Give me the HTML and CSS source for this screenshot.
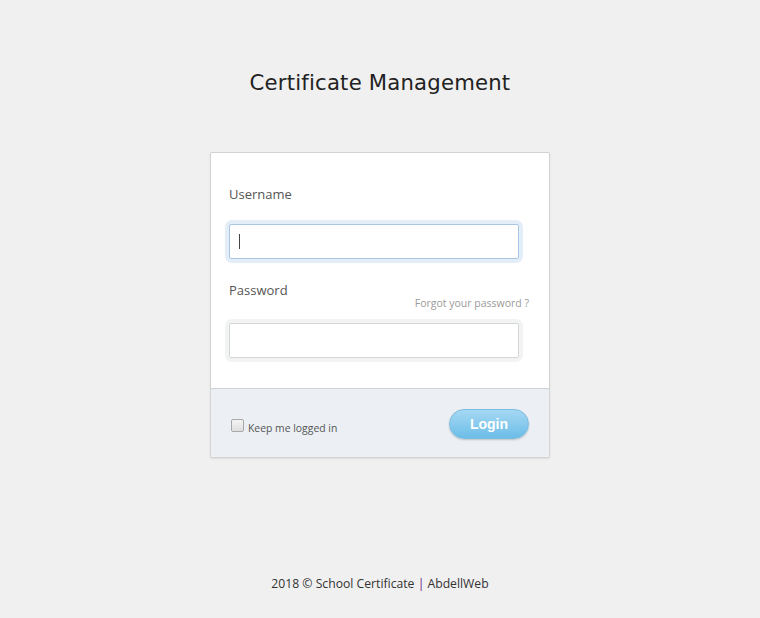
FILE: index.html
```html
<!DOCTYPE html>
<html>
<head>
<meta charset="utf-8">
<link rel="stylesheet" href="styles.css">
</head>
<body>
<div class="page">
  <h1 class="title">Certificate Management</h1>
  <form class="card">
    <div class="card-body">
      <label class="label" for="user">Username</label>
      <div class="field field-focus"><input class="input" id="user" type="text"><span class="caret"></span></div>
      <div class="pw-head">
        <label class="label" for="pw">Password</label>
        <a class="forgot" href="#">Forgot your password ?</a>
      </div>
      <div class="field"><input class="input" id="pw" type="password"></div>
    </div>
    <div class="card-foot">
      <label class="keep"><span class="check"></span>Keep me logged in</label>
      <button class="login" type="button">Login</button>
    </div>
  </form>
  <footer class="footer">2018 © School Certificate <span class="pipe">|</span> AbdellWeb</footer>
</div>
</body>
</html>
```
FILE: styles.css
```css
html, body {
  margin: 0;
  padding: 0;
  background: #f0f0f0;
}
.page {
  width: 760px;
  height: 618px;
  display: flex;
  flex-direction: column;
  align-items: center;
}
.title {
  margin: 69px 0 0;
  font-family: "DejaVu Sans", Verdana, sans-serif;
  font-weight: normal;
  font-size: 21.2px;
  line-height: 28px;
  color: #222222;
  letter-spacing: 0.2px;
}
.card {
  margin: 55px 0 0;
  width: 338px;
  background: #ffffff;
  border: 1px solid #d3d3d3;
  border-radius: 2px;
  box-shadow: 0 1px 2px rgba(0,0,0,0.08);
}
.card-body {
  padding: 32px 20px 30px 18px;
}
.label {
  display: block;
  font-family: "Open Sans", sans-serif;
  font-size: 13px;
  line-height: 18px;
  color: #555555;
}
.field {
  position: relative;
  width: 290px;
  height: 35px;
  border-radius: 3px;
  box-shadow: 0 0 0 4px #f2f4f4;
}
.field-focus {
  margin-top: 21px;
  box-shadow: 0 0 0 4px #e3eef9;
}
.input {
  box-sizing: border-box;
  width: 100%;
  height: 100%;
  margin: 0;
  border: 1px solid #d6d6d6;
  border-radius: 2px;
  background: #ffffff;
  outline: none;
  padding: 0 10px;
}
.field-focus .input {
  border-color: #a9c6e4;
}
.caret {
  position: absolute;
  left: 10px;
  top: 10px;
  width: 1px;
  height: 15px;
  background: #444444;
}
.pw-head {
  position: relative;
  margin-top: 22px;
  height: 39px;
}
.forgot {
  position: absolute;
  right: 0;
  top: 15px;
  font-family: "Open Sans", sans-serif;
  font-size: 10.5px;
  line-height: 15px;
  color: #9a9a9a;
  text-decoration: none;
}
.pw-head + .field {
  margin-top: 3px;
}
.card-foot {
  display: flex;
  align-items: center;
  justify-content: space-between;
  height: 68px;
  padding: 0 20px 0 20px;
  border-top: 1px solid #cfd3d6;
  background: #ecf0f4;
}
.keep {
  display: flex;
  align-items: center;
  margin-top: 9px;
  font-family: "Open Sans", sans-serif;
  font-size: 10.4px;
  color: #555555;
}
.check {
  width: 11px;
  height: 11px;
  margin-right: 4px;
  margin-top: -4px;
  border: 1px solid #a8a8a8;
  border-radius: 2px;
  background: linear-gradient(#f4f4f4, #dedede);
}
.login {
  width: 80px;
  height: 30px;
  margin-top: 2px;
  border: 1px solid #7cbde3;
  border-radius: 15px;
  background: linear-gradient(#a5d8f3, #6cbde8);
  box-shadow: 0 1px 2px rgba(0,0,0,0.2);
  color: #ffffff;
  font-family: "Liberation Sans", Arial, sans-serif;
  font-weight: bold;
  font-size: 14px;
  padding: 0;
}
.footer {
  margin-top: auto;
  margin-bottom: 26px;
  font-family: "Open Sans", sans-serif;
  font-size: 12.2px;
  color: #333333;
}
.pipe {
  color: #6a2a82;
}
```
